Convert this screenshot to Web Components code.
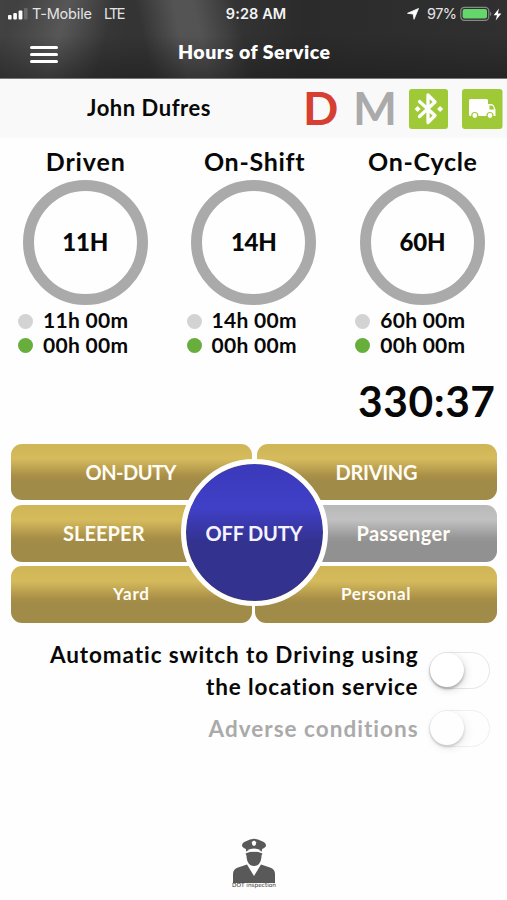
<!DOCTYPE html>
<html lang="en">
<head>
<meta charset="utf-8">
<title>Hours of Service</title>
<style>
html,body{margin:0;padding:0;background:#fefefe}
body{width:507px;height:900px;overflow:hidden;font-family:Lato,"Open Sans",sans-serif;color:#080808}
</style>
</head>
<body>
<hos-app></hos-app>
<script>
function define(name, html, after) {
  customElements.define(name, class extends HTMLElement {
    connectedCallback() {
      if (this.shadowRoot) return;
      const root = this.attachShadow({ mode: 'open' });
      const t = document.createElement('template');
      t.innerHTML = typeof html === 'function' ? html(this) : html;
      root.append(t.content.cloneNode(true));
      if (after) after(this, root);
    }
  });
}

/* One line of text whose tracking is adjusted to fill the width in its "w" attribute. */
define('fit-label', el => `<style>
  :host{display:block;flex:none;width:${el.getAttribute('w')}px;white-space:nowrap}
  span{display:inline-block;white-space:nowrap}
</style><span>${el.getAttribute('text')}</span>`, (el, root) => {
  const s = root.querySelector('span');
  const natural = s.getBoundingClientRect().width;
  const n = s.textContent.length - 1;
  s.style.letterSpacing = ((+el.getAttribute('w') - natural) / n) + 'px';
});

define('status-bar', `<style>
  :host{display:grid;grid-template-columns:1fr auto 1fr;align-items:center;height:28px;color:#e4e4e4;font:400 14.5px/28px Inter,sans-serif}
  .l,.r{display:flex;align-items:center}
  .l{padding-left:8px}.r{justify-content:flex-end;padding-right:5px}
  svg{display:block;flex:none}
  .c{font-weight:600;color:#f4f4f4}
</style>
<div class="l"><svg width="20" height="12" viewBox="0 0 20 12"><g fill="#fff"><rect x="0" y="7" width="3.6" height="4.5" rx="1"/><rect x="5.3" y="5" width="3.6" height="6.5" rx="1"/><rect x="10.6" y="2.6" width="3.8" height="8.9" rx="1"/></g><rect x="16" y="0" width="3.6" height="11.5" rx="1" fill="#6a6a6a"/></svg>
<fit-label text="T-Mobile" w="60" style="margin-left:4px"></fit-label><fit-label text="LTE" w="21.5" style="margin-left:12px"></fit-label></div>
<fit-label class="c" text="9:28 AM" w="60.5" style="margin-left:5px"></fit-label>
<div class="r"><svg width="12" height="12" viewBox="0 0 12 12" style="margin-right:8px"><path d="M11.5.5 7 11.3 6.2 6 .5 5.3Z" fill="#fff" stroke="#fff" stroke-width=".8" stroke-linejoin="round"/></svg>
<fit-label text="97%" w="30"></fit-label>
<svg width="33" height="16" viewBox="0 0 33 16" style="margin-left:3px"><rect x=".8" y="1.3" width="28" height="13" rx="3.6" fill="none" stroke="#888" stroke-width="1.2"/><rect x="2.6" y="3.1" width="24.4" height="9.4" rx="2" fill="#64d66a"/><path d="M30.2 5.5q2.3 2.3 0 4.8Z" fill="#888"/></svg>
<svg width="9" height="13" viewBox="0 0 9 13"><path d="M6 .5.6 7.2H4L2.7 12.5 8.4 5.5H4.9Z" fill="#fff"/></svg></div>`);

define('nav-header', `<style>
  :host{display:block;height:79px;overflow:hidden;color:#fff;border-bottom:1px solid #777;box-sizing:border-box;
  background:
   linear-gradient(180deg,transparent 45%,rgba(28,28,28,.55)),
   linear-gradient(105deg,transparent 3%,rgba(115,115,115,.5) 13%,rgba(115,115,115,.4) 15%,transparent 22%),
   linear-gradient(78deg,transparent 29%,rgba(115,115,115,.5) 36%,rgba(115,115,115,.5) 40%,transparent 48%),
   linear-gradient(90deg,#424242,#343434 25%,#343434 45%,#2b2b2b 60%,#303030)}
  .row{display:grid;grid-template-columns:178px 1fr;align-items:center;height:49px}
  .burger{display:flex;flex-direction:column;gap:3.6px;width:28px;margin:4px 0 0 30px}
  .burger i{height:3.4px;border-radius:2px;background:#fff}
  fit-label{font-size:19.5px;font-weight:800;line-height:48px;margin-top:-2px}
</style>
<status-bar></status-bar>
<div class="row"><div class="burger"><i></i><i></i><i></i></div><fit-label text="Hours of Service" w="152"></fit-label></div>`);

define('driver-bar', `<style>
  :host{display:flex;height:59px;background:#f9f9f9;align-items:center;box-sizing:border-box;padding-left:87px}
  .name{font-size:22px;font-weight:700;margin-bottom:2px}
  .d,.m{font-size:46.5px;line-height:59px;font-weight:700;margin-top:-3px}
  .d{color:#d63f31;font-weight:700;margin-left:92.5px}.m{color:#aaa;margin-left:14.5px}
  svg{flex:none;display:block}
</style>
<fit-label class="name" text="John Dufres" w="123.500"></fit-label>
<span class="d">D</span><span class="m">M</span>
<svg width="39" height="40" viewBox="0 0 39 40" style="margin-left:auto"><rect width="39" height="40" rx="3" fill="#a0c938"/><path d="M10.5 12.5 26 26.500 19 33.500V6L26 13 10.500 27.500" fill="none" stroke="#fff" stroke-width="3.300" stroke-linejoin="round" stroke-linecap="round"/><path d="m8.600 17 3 3-3 3-3-3Zm22.500 0 3 3-3 3-3-3Z" fill="#fff"/></svg>
<svg width="41" height="40" viewBox="0 0 41 40" style="margin:0 4px 0 14px"><rect width="40.500" height="40" rx="3" fill="#a0c938"/><path d="M8.500 10H24.500Q26 10 26 11.500V15H29.500Q31 15 32 17L33.500 20.500V27H8.500Q7 27 7 25.500V11.500Q7 10 8.500 10Z" fill="#fff"/><path d="M27.500 16.500h2q1 0 1.500 1l1.300 3H27.500Z" fill="#a0c938"/><g fill="#fff" stroke="#a0c938" stroke-width="1.200"><circle cx="12.800" cy="26.500" r="3"/><circle cx="28" cy="26.500" r="3"/></g></svg>`);

define('hour-dial', el => `<style>
  :host{display:flex;flex-direction:column;align-items:center}
  .t{font-size:25px;font-weight:700;line-height:30px;margin-top:8px}
  .ring{width:125px;height:125px;box-sizing:border-box;border:11px solid #aaa;border-radius:50%;display:flex;align-items:center;justify-content:center;margin:4px 0 4px}
  .ring fit-label{font-size:24px;font-weight:900;line-height:30px;margin-top:-2px}
  .line{display:flex;align-items:center;gap:10px;height:24.400px;font-size:21px;line-height:24px;font-weight:700;align-self:flex-start;margin-left:17px}
  .line fit-label{margin-top:-2px}
  i{width:15px;height:15px;border-radius:50%;background:#d3d3d3;flex:none}
  .g i{background:#67ae3c}
</style>
<fit-label class="t" text="${el.getAttribute('name')}" w="${el.getAttribute('tw')}"></fit-label>
<div class="ring"><fit-label text="${el.getAttribute('total')}H" w="46"></fit-label></div>
<div class="line"><i></i><fit-label text="${el.getAttribute('total')}h 00m" w="85"></fit-label></div>
<div class="line g"><i></i><fit-label text="00h 00m" w="85"></fit-label></div>`);

define('duty-button', `<style>
  :host{display:flex;align-items:center;box-sizing:border-box;height:56.500px;border-radius:11px;color:#fffdf5;font-size:20px;line-height:24px;font-weight:700;
  background:linear-gradient(180deg,#d0b557 0,#d6bb5d 26%,#a98f47 57%,#a18b48 66%,#a18b48)}
  :host([muted]){background:linear-gradient(180deg,#b9b9b9 0,#c1c1c1 26%,#979797 57%,#919191 66%,#919191)}
  :host([small]){font-size:17px;line-height:22px;padding-bottom:1px}
</style><slot></slot>`);

define('duty-pad', `<style>
  :host{display:block;position:relative;margin:0 10px 0 11px}
  .rows{display:grid;gap:4.800px}
  .row{display:grid;grid-template-columns:240.500px 1fr;gap:5px}
  .row.last{gap:3px}
  .off{position:absolute;left:169.500px;top:15.500px;width:147px;height:147px;box-sizing:border-box;border:5px solid #fefefe;border-radius:50%;display:flex;align-items:center;justify-content:center;color:#f5f3ff;font-size:20px;font-weight:700;
  background:linear-gradient(180deg,#3a39ba,#4040c8 32%,#33328f 57%,#33328f) padding-box}
</style>
<div class="rows">
<div class="row"><duty-button style="padding-left:74.500px"><fit-label text="ON-DUTY" w="91"></fit-label></duty-button><duty-button style="padding-left:79px"><fit-label text="DRIVING" w="82"></fit-label></duty-button></div>
<div class="row"><duty-button style="padding-left:52px"><fit-label text="SLEEPER" w="81.500"></fit-label></duty-button><duty-button muted style="padding-left:100px"><fit-label text="Passenger" w="93.500"></fit-label></duty-button></div>
<div class="row last"><duty-button small style="padding-left:102px"><fit-label text="Yard" w="36"></fit-label></duty-button><duty-button small style="padding-left:86.500px"><fit-label text="Personal" w="69.500"></fit-label></duty-button></div>
</div>
<div class="off"><fit-label text="OFF DUTY" w="97"></fit-label></div>`);

define('toggle-switch', `<style>
  :host{display:block;width:61px;height:37px;border-radius:19px;box-sizing:border-box;border:1.500px solid #e6e6e6;background:#fefefe;flex:none}
  i{display:block;width:34px;height:34px;border-radius:50%;background:#fff;box-shadow:0 2px 3px rgba(0,0,0,.28),2px 3px 9px rgba(0,0,0,.12)}
  :host([disabled]){opacity:.62}
</style><i></i>`);

define('setting-row', `<style>
  :host{display:flex;justify-content:flex-end;align-items:center;gap:11px;padding-right:17px;font-size:22.500px;font-weight:700;line-height:31.400px}
  :host([disabled]){color:#aaa}
  .txt{display:flex;flex-direction:column;align-items:flex-end}
</style><div class="txt"><slot></slot></div><slot name="switch"></slot>`);

define('dot-inspection', `<style>
  :host{display:flex;flex-direction:column;align-items:center;width:46px;margin-left:231px}
  svg{display:block}
  fit-label{font:400 5.800px/6px "DejaVu Sans",sans-serif;color:#333;margin-top:-1px}
</style>
<svg width="42" height="45" viewBox="0 0 42 45"><g fill="#595959">
<path d="M9 7.500Q9 4.800 13 3.300Q17 1 21 .7Q25 1 29 3.300Q33 4.800 33 7.500Q33 9.300 29 11V13.500Q21 9.800 13 13.500V11Q9 9.300 9 7.500Z"/>
<path d="M12.500 15.500Q21 11.500 29.500 15.500Q28 18 28.500 19Q27.500 28 21 28Q14.500 28 13.500 19Q14 18 12.500 15.500Z"/>
<path d="M0 45V36Q0 31 5 29.500L14 26.500 21 38 28 26.500 37 29.500Q42 31 42 36V45Z"/></g>
<path d="M21 2.500 23.300 4 22.700 7 21 8 19.300 7 18.700 4Z" fill="#fff"/><path d="M14 12.300Q21 8.800 28 12.300 21 15 14 12.300Z" fill="#fff"/></svg>
<fit-label text="DOT inspection" w="44"></fit-label>`);

define('hos-app', `<style>
  :host{display:flex;flex-direction:column;width:507px;height:900px;background:#fefefe}
  .dials{display:grid;grid-template-columns:repeat(3,168.600px);margin-left:1px}
  .clock{align-self:flex-end;margin:17px 12px 0 0;font-size:42.500px;font-weight:700;line-height:52px}
  duty-pad{margin-top:17px}
  .a{margin-top:16.500px}.b{margin-top:8px}
  dot-inspection{margin-top:91px}
</style>
<nav-header></nav-header>
<driver-bar></driver-bar>
<div class="dials">
<hour-dial name="Driven" tw="79" total="11"></hour-dial>
<hour-dial name="On-Shift" tw="100" total="14"></hour-dial>
<hour-dial name="On-Cycle" tw="109" total="60"></hour-dial>
</div>
<fit-label class="clock" text="330:37" w="137"></fit-label>
<duty-pad></duty-pad>
<setting-row class="a"><fit-label text="Automatic switch to Driving using" w="368"></fit-label><fit-label text="the location service" w="212"></fit-label><toggle-switch slot="switch"></toggle-switch></setting-row>
<setting-row class="b" disabled><fit-label text="Adverse conditions" w="209.500"></fit-label><toggle-switch slot="switch" disabled></toggle-switch></setting-row>
<dot-inspection></dot-inspection>`);
</script>
</body>
</html>
